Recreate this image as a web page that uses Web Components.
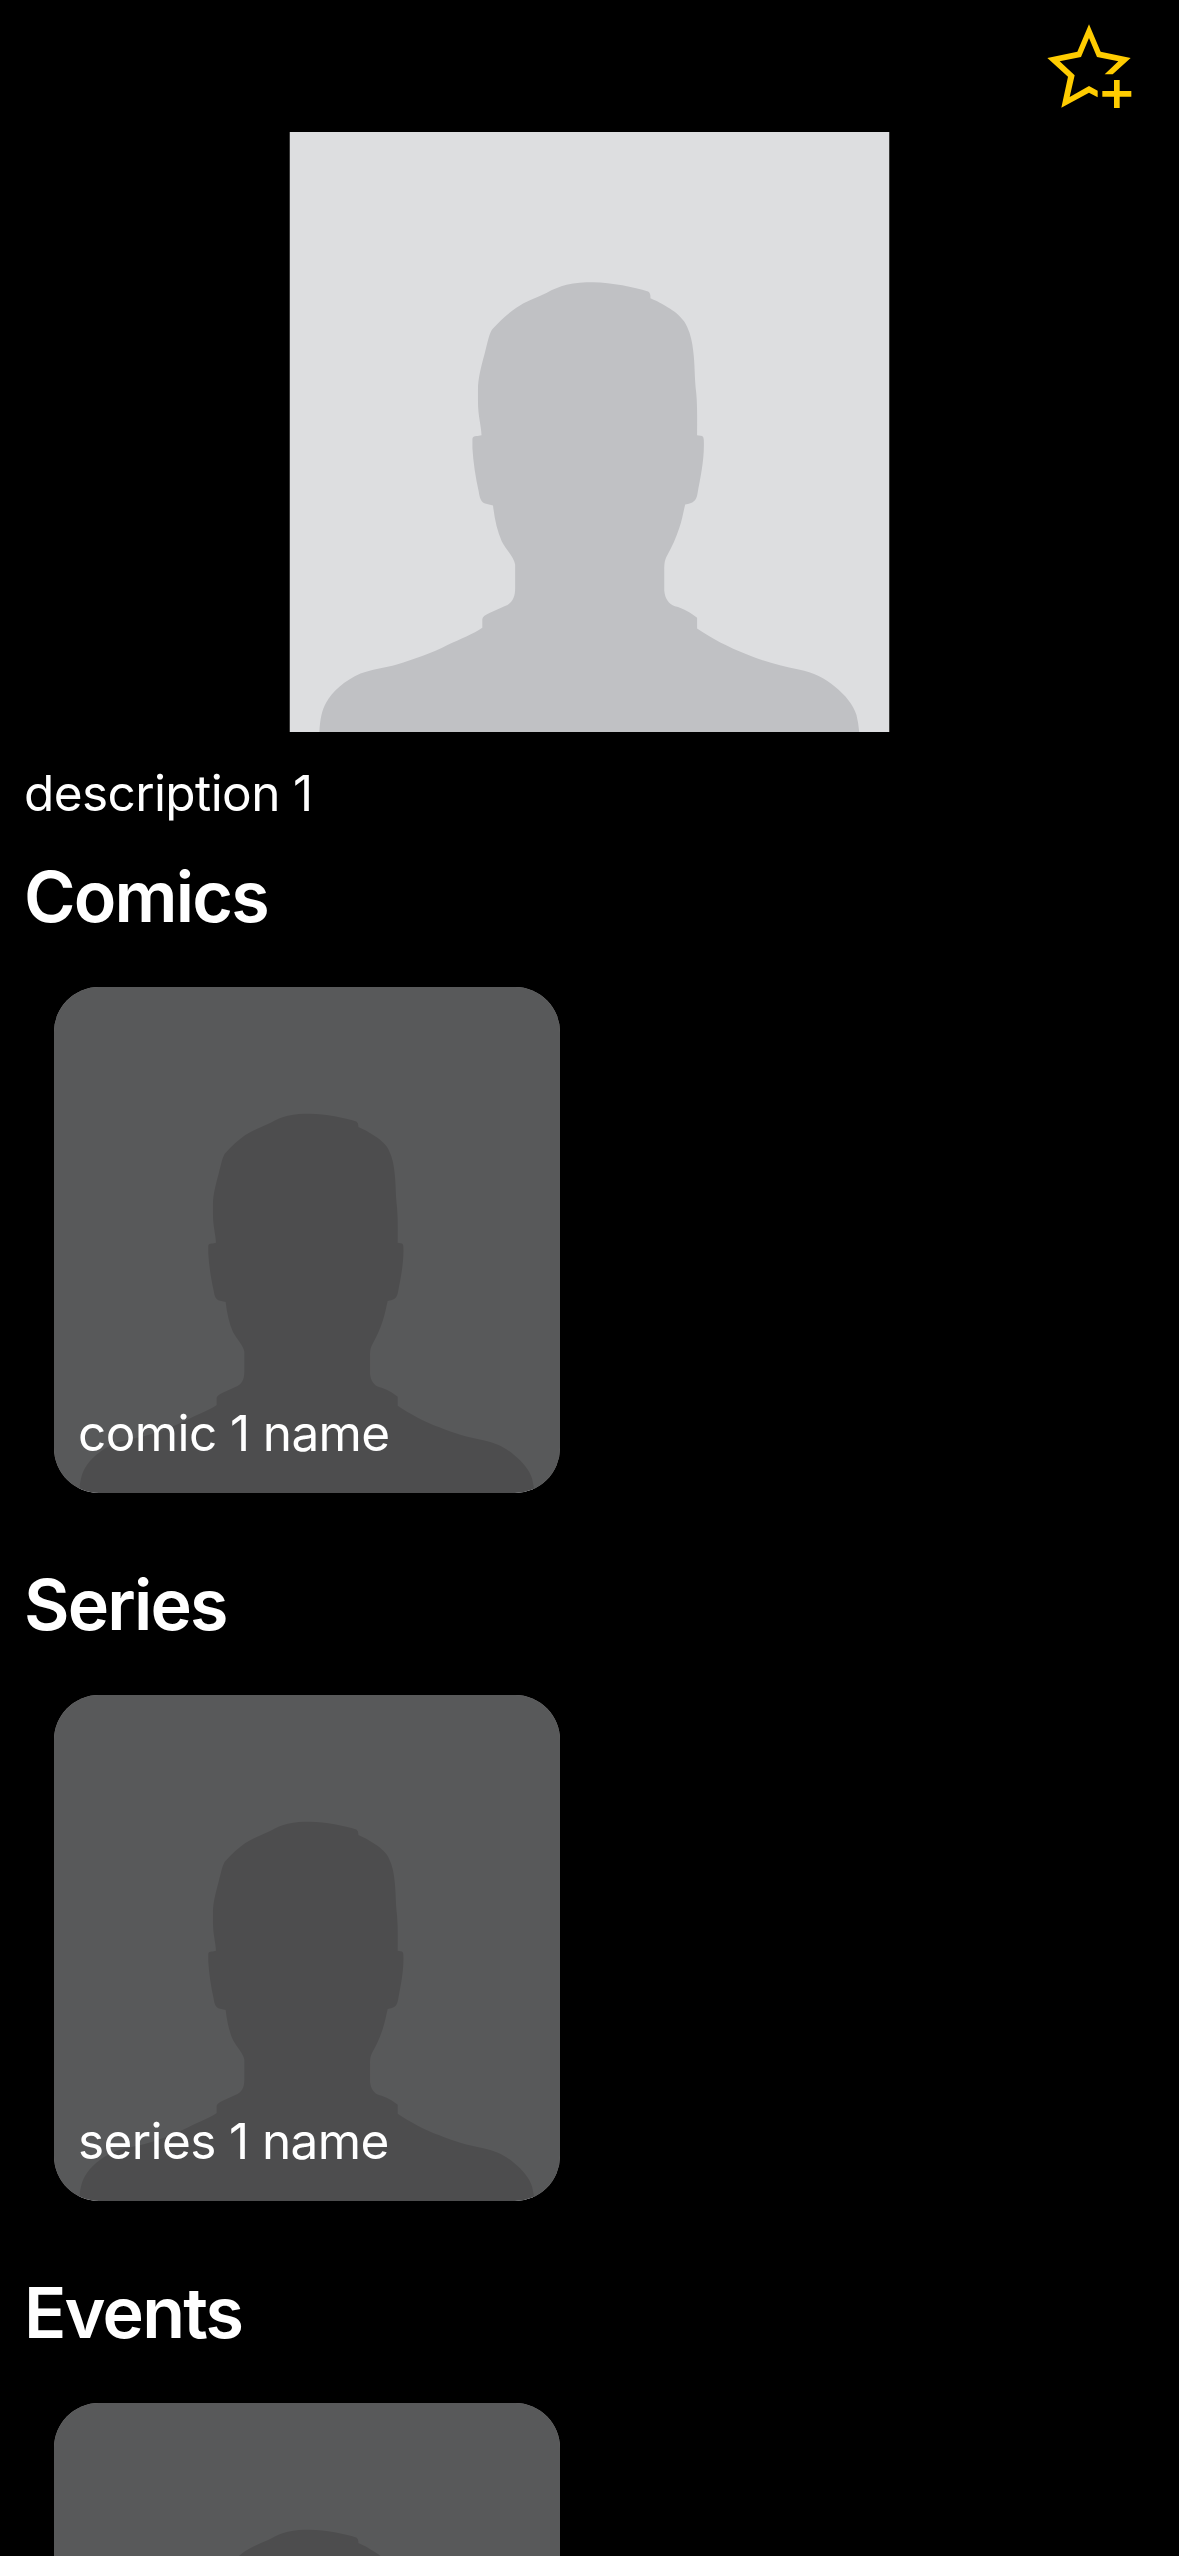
<!DOCTYPE html>
<html lang="en">
<head>
<meta charset="utf-8">
<title>Character</title>
<style>
html{background:#000}
body{margin:0;background:#000;color:#fff;font-family:Inter,"Liberation Sans",sans-serif;height:2556px;overflow:hidden}
</style>
</head>
<body>
<character-page>
  <favorite-button slot="action"></favorite-button>
  <portrait-image slot="hero"></portrait-image>
  <body-text slot="description">description 1</body-text>
  <media-section heading="Comics"><media-card>comic 1 name</media-card></media-section>
  <media-section heading="Series"><media-card>series 1 name</media-card></media-section>
  <media-section heading="Events"><media-card></media-card></media-section>
</character-page>
<script>
const define = (name, html, init) => {
  const template = document.createElement('template');
  template.innerHTML = html;
  customElements.define(name, class extends HTMLElement {
    constructor() {
      super();
      this.attachShadow({ mode: 'open' }).append(template.content.cloneNode(true));
    }
    connectedCallback() { if (init) init(this); }
  });
};

define('portrait-image', `
<style>
:host{display:block;width:600px;height:600px}
svg{display:block;width:100%;height:100%}
</style>
<svg viewBox="24.5 29.5 1517 1518.5" preserveAspectRatio="none" aria-hidden="true">
  <rect x="24.5" y="29.5" width="1517" height="1518.5" fill="#dddee0"/>
  <path fill="#c0c1c4" d="M100 1548C102 1515 106 1494 117 1474C133 1445 164 1418 204 1400C230 1390 266 1385 296 1377C340 1364 385 1348 424 1328C456 1312 490 1300 512 1284L512 1262Q514 1254 530 1247L568 1230C587 1222 595 1208 595 1184L595 1124C593 1107 572 1086 561 1065C550 1040 543 1010 539 975L519 970C510 966 506 960 503 940C495 905 489 865 487 830L487 806Q488 798 500 799L510 797C509 770 501 750 501 710L501 680C501 655 508 627 518 590C526 560 530 536 539 527C556 508 577 489 598 474C622 458 648 449 674 437C691 427 707 421 725 416C747 411 769 410 792 410C840 411 895 422 931 433Q938 437 937 450C948 455 958 459 969 466C987 477 999 483 1012 497C1020 505 1026 513 1030 523C1039 542 1043 563 1045 582C1050 620 1048 651 1053 691C1056 725 1055 760 1055 797L1068 799Q1072 801 1072 809C1074 860 1063 905 1056 945C1053 963 1045 969 1025 972C1020 992 1017 1012 1010 1032C1002 1056 992 1079 980 1100C973 1113 972 1120 972 1140L972 1190C974 1211 983 1224 999 1230C1020 1235 1040 1247 1055 1259L1055 1286C1090 1310 1135 1334 1180 1351C1225 1370 1265 1381 1312 1390C1350 1398 1378 1412 1403 1433C1430 1455 1450 1479 1458 1505Q1463 1525 1465 1548Z"/>
</svg>`);

define('favorite-button', `
<style>
:host{display:block;width:120px;height:110px}
svg{display:block;width:100%;height:100%}
</style>
<svg viewBox="0 0 360 330" fill="#fc0" role="img" aria-label="Add to favorites">
  <path d="M180 43L215 125L305 144L251 193H227L268 154L204 141L180 84L156 141L92 154L137 196L122 261L180 228L206 242V262L180 248L97 293L117 200L55 144L145 125Z"/>
  <path d="M255 210H272V243H307V260H272V294H255V260H220V243H255Z"/>
</svg>`);

define('body-text', `
<style>
:host{display:block;font-size:49.5px;line-height:74px;font-weight:430;letter-spacing:-.6px;white-space:nowrap}
</style><slot></slot>`);

define('media-card', `
<style>
:host{display:grid;width:506px;height:506px;border-radius:45px;overflow:hidden}
portrait-image,.shade{grid-area:1/1;width:506px;height:506px}
.shade{z-index:1;display:flex;align-items:flex-end;box-sizing:border-box;padding:0 24px 23px;background:rgba(0,0,0,.6)}
</style>
<portrait-image></portrait-image>
<div class="shade"><body-text><slot></slot></body-text></div>`);

define('media-section', `
<style>
:host{display:flex;flex-direction:column;flex:none;gap:47px;height:708px;box-sizing:border-box}
h2{margin:0;padding-left:24px;font-size:70px;line-height:86px;font-weight:600;letter-spacing:-1.8px}
.row{display:flex;padding-left:54px}
</style>
<h2></h2><div class="row"><slot></slot></div>`,
  host => { host.shadowRoot.querySelector('h2').textContent = host.getAttribute('heading'); });

define('character-page', `
<style>
:host{display:flex;flex-direction:column;width:1179px;height:2556px;overflow:hidden}
header{flex:none;display:flex;justify-content:flex-end;box-sizing:border-box;height:132px;padding:10px 30px 0 0}
.hero{flex:none;display:flex;justify-content:center;padding-right:1px;transform:translateX(.5px)}
.description{flex:none;padding:24px 24px}
main{display:flex;flex-direction:column}
</style>
<header><slot name="action"></slot></header>
<div class="hero"><slot name="hero"></slot></div>
<div class="description"><slot name="description"></slot></div>
<main><slot></slot></main>`);
</script>
</body>
</html>
